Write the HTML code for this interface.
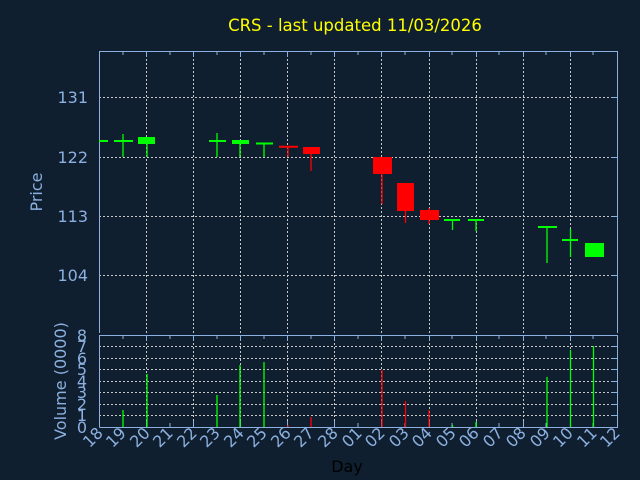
<!DOCTYPE html>
<html><head><meta charset="utf-8"><style>
html,body{margin:0;padding:0;background:#0f1f2f;}
svg{display:block;}
text{font-family:"DejaVu Sans","Liberation Sans",sans-serif;}
</style></head><body>
<svg width="640" height="480" viewBox="0 0 640 480" xmlns="http://www.w3.org/2000/svg">
<rect width="640" height="480" fill="#0f1f2f"/>
<text x="355" y="31" fill="#ffff00" font-size="16.5" text-anchor="middle">CRS - last updated 11/03/2026</text>
<g stroke="#c8c8c8" stroke-width="1" stroke-dasharray="2,2">
<line x1="146.5" y1="51" x2="146.5" y2="427"/><line x1="193.5" y1="51" x2="193.5" y2="427"/>
<line x1="240.5" y1="51" x2="240.5" y2="427"/><line x1="287.5" y1="51" x2="287.5" y2="427"/>
<line x1="334.5" y1="51" x2="334.5" y2="427"/><line x1="381.5" y1="51" x2="381.5" y2="427"/>
<line x1="429.5" y1="51" x2="429.5" y2="427"/><line x1="476.5" y1="51" x2="476.5" y2="427"/>
<line x1="523.5" y1="51" x2="523.5" y2="427"/><line x1="570.5" y1="51" x2="570.5" y2="427"/>
<line x1="99" y1="97.5" x2="617" y2="97.5"/><line x1="99" y1="157.5" x2="617" y2="157.5"/>
<line x1="99" y1="216.5" x2="617" y2="216.5"/><line x1="99" y1="275.5" x2="617" y2="275.5"/>
<line x1="99" y1="346.5" x2="617" y2="346.5"/><line x1="99" y1="358.5" x2="617" y2="358.5"/>
<line x1="99" y1="369.5" x2="617" y2="369.5"/><line x1="99" y1="381.5" x2="617" y2="381.5"/>
<line x1="99" y1="392.5" x2="617" y2="392.5"/><line x1="99" y1="404.5" x2="617" y2="404.5"/>
<line x1="99" y1="415.5" x2="617" y2="415.5"/>
</g>
<g stroke="#8cb0e0" stroke-width="1" fill="none">
<path d="M99.5 333V51.5H617.5V333"/>
<path d="M99.5 427.5V335.5H617.5V427.5H99.5"/>
<path d="M123 51v4M170 51v4M217 51v4M264 51v4M311 51v4M358 51v4M405 51v4M452 51v4M499 51v4M546 51v4M593 51v4M146.5 51v6M193.5 51v6M240.5 51v6M287.5 51v6M334.5 51v6M381.5 51v6M429.5 51v6M476.5 51v6M523.5 51v6M570.5 51v6"/>
<path d="M123 335v4M170 335v4M217 335v4M264 335v4M311 335v4M358 335v4M405 335v4M452 335v4M499 335v4M546 335v4M593 335v4M146.5 335v6M193.5 335v6M240.5 335v6M287.5 335v6M334.5 335v6M381.5 335v6M429.5 335v6M476.5 335v6M523.5 335v6M570.5 335v6"/>
<path d="M123 427v-4M170 427v-4M217 427v-4M264 427v-4M311 427v-4M358 427v-4M405 427v-4M452 427v-4M499 427v-4M546 427v-4M593 427v-4M146.5 427v-6M193.5 427v-6M240.5 427v-6M287.5 427v-6M334.5 427v-6M381.5 427v-6M429.5 427v-6M476.5 427v-6M523.5 427v-6M570.5 427v-6"/>
<path d="M611 97.5h6M611 157.5h6M611 216.5h6M611 275.5h6M611 346.5h6M611 358.5h6M611 369.5h6M611 381.5h6M611 392.5h6M611 404.5h6M611 415.5h6"/>
</g>
<g stroke="#00ff00" stroke-width="1.3" fill="#00ff00">
<line x1="99" y1="141" x2="108" y2="141" stroke-width="2"/>
<line x1="123" y1="134" x2="123" y2="157"/><line x1="114" y1="141" x2="133" y2="141" stroke-width="2"/>
<line x1="147" y1="137" x2="147" y2="157"/><rect x="138" y="137" width="17" height="7" stroke="none"/>
<line x1="217" y1="133" x2="217" y2="157"/><line x1="209" y1="141" x2="226" y2="141" stroke-width="2"/>
<line x1="240" y1="140" x2="240" y2="157"/><rect x="232" y="140" width="17" height="4" stroke="none"/>
<line x1="264" y1="143" x2="264" y2="157"/><line x1="256" y1="143.5" x2="273" y2="143.5" stroke-width="2"/>
<line x1="452.5" y1="220" x2="452.5" y2="230"/><line x1="444" y1="220" x2="460" y2="220" stroke-width="2"/>
<line x1="476" y1="220" x2="476" y2="231"/><line x1="468" y1="220" x2="484" y2="220" stroke-width="2"/>
<line x1="547" y1="227" x2="547" y2="263"/><line x1="538" y1="227" x2="557" y2="227" stroke-width="2"/>
<line x1="570.5" y1="229" x2="570.5" y2="257"/><line x1="562" y1="240" x2="578" y2="240" stroke-width="2"/>
<rect x="585" y="243" width="19" height="14" stroke="none"/>
</g>
<g stroke="#ff0000" stroke-width="1.3" fill="#ff0000">
<line x1="288" y1="146" x2="288" y2="157"/><line x1="279" y1="146.7" x2="298" y2="146.7" stroke-width="2"/>
<line x1="311" y1="147" x2="311" y2="171"/><rect x="303" y="147" width="17" height="7" stroke="none"/>
<line x1="382" y1="157" x2="382" y2="204"/><rect x="373" y="157" width="19" height="17" stroke="none"/>
<line x1="405.5" y1="183" x2="405.5" y2="223"/><rect x="397" y="183" width="17" height="28" stroke="none"/>
<line x1="429" y1="208" x2="429" y2="224"/><rect x="420" y="210" width="19" height="10" stroke="none"/>
</g>
<g stroke="#00ff00" stroke-width="1.3">
<line x1="123" y1="410" x2="123" y2="427"/><line x1="147" y1="374" x2="147" y2="427"/>
<line x1="217" y1="395" x2="217" y2="427"/><line x1="240" y1="365" x2="240" y2="427"/>
<line x1="264" y1="362" x2="264" y2="427"/><line x1="452.5" y1="425" x2="452.5" y2="427"/>
<line x1="476" y1="422" x2="476" y2="427"/><line x1="547" y1="377" x2="547" y2="427"/>
<line x1="570.5" y1="350" x2="570.5" y2="427"/><line x1="593.5" y1="346" x2="593.5" y2="427"/>
</g>
<g stroke="#ff0000" stroke-width="1.3">
<line x1="288" y1="425" x2="288" y2="427"/><line x1="311" y1="417" x2="311" y2="427"/>
<line x1="382" y1="370" x2="382" y2="427"/><line x1="405.5" y1="401" x2="405.5" y2="427"/>
<line x1="429" y1="410" x2="429" y2="427"/>
</g>
<g fill="#8cb0e0" font-size="16" text-anchor="end">
<text x="88" y="103">131</text><text x="88" y="163">122</text>
<text x="88" y="222">113</text><text x="88" y="281">104</text>
<text x="87" y="341">8</text><text x="87" y="352">7</text><text x="87" y="364">6</text>
<text x="87" y="375">5</text><text x="87" y="387">4</text><text x="87" y="398">3</text>
<text x="87" y="410">2</text><text x="87" y="421">1</text><text x="87" y="433">0</text>
</g>
<text transform="translate(42,192) rotate(-90)" fill="#8cb0e0" font-size="16" text-anchor="middle">Price</text>
<text transform="translate(66,381) rotate(-90)" fill="#8cb0e0" font-size="16" text-anchor="middle">Volume (0000)</text>
<g fill="#8cb0e0" font-size="16" text-anchor="end">
<text transform="translate(104,434) rotate(-45)">18</text>
<text transform="translate(127,434) rotate(-45)">19</text>
<text transform="translate(151,434) rotate(-45)">20</text>
<text transform="translate(174,434) rotate(-45)">21</text>
<text transform="translate(198,434) rotate(-45)">22</text>
<text transform="translate(221,434) rotate(-45)">23</text>
<text transform="translate(245,434) rotate(-45)">24</text>
<text transform="translate(268,434) rotate(-45)">25</text>
<text transform="translate(292,434) rotate(-45)">26</text>
<text transform="translate(315,434) rotate(-45)">27</text>
<text transform="translate(339,434) rotate(-45)">28</text>
<text transform="translate(363,434) rotate(-45)">01</text>
<text transform="translate(386,434) rotate(-45)">02</text>
<text transform="translate(410,434) rotate(-45)">03</text>
<text transform="translate(433,434) rotate(-45)">04</text>
<text transform="translate(457,434) rotate(-45)">05</text>
<text transform="translate(480,434) rotate(-45)">06</text>
<text transform="translate(504,434) rotate(-45)">07</text>
<text transform="translate(527,434) rotate(-45)">08</text>
<text transform="translate(551,434) rotate(-45)">09</text>
<text transform="translate(574,434) rotate(-45)">10</text>
<text transform="translate(598,434) rotate(-45)">11</text>
<text transform="translate(621,434) rotate(-45)">12</text>
</g>
<text x="347" y="472" fill="#000000" font-size="16" text-anchor="middle">Day</text>
</svg>
</body></html>
